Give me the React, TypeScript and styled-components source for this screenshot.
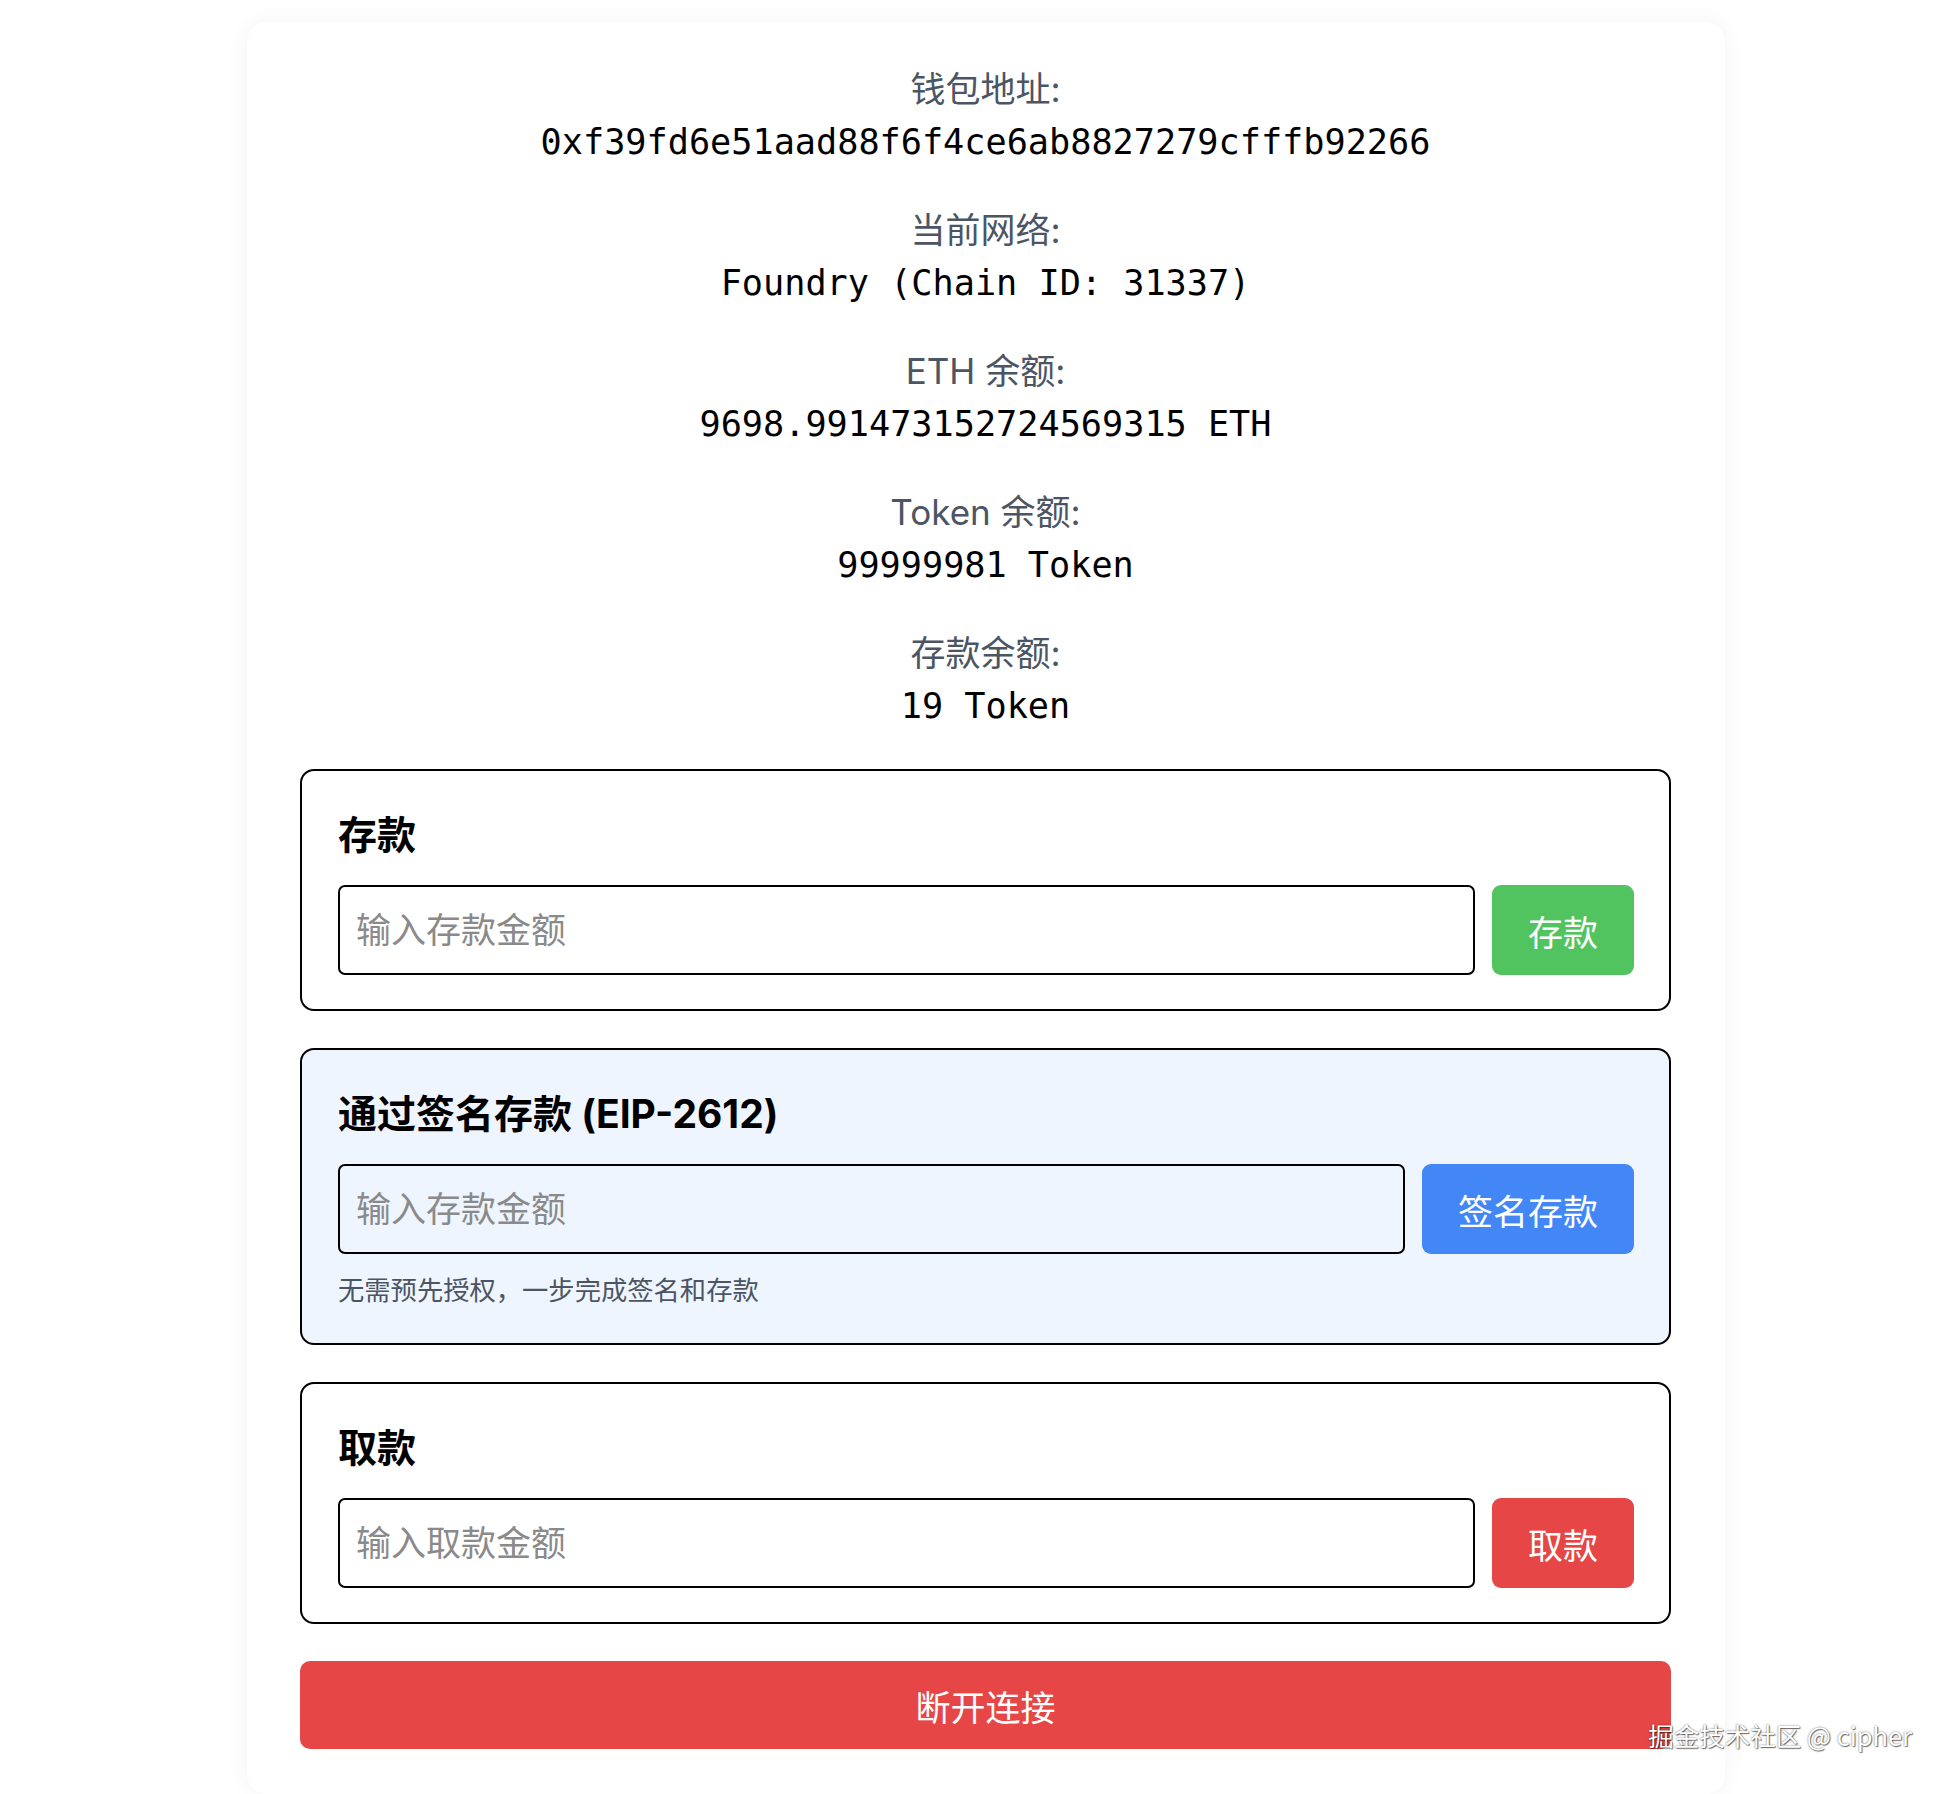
import React from "react";
import styled, { createGlobalStyle } from "styled-components";

const GlobalStyle = createGlobalStyle`
  html, body {
    margin: 0;
    padding: 0;
    background: #ffffff;
  }
  body {
    font-family: Inter, "Noto Sans CJK SC", sans-serif;
    color: #111;
  }
  * { box-sizing: border-box; }
`;

const Page = styled.div`
  position: relative;
  width: 1954px;
  min-height: 1794px;
  padding-top: 22px;
  padding-left: 247px;
  overflow: hidden;
`;

const Card = styled.div`
  width: 1478px;
  background: #fff;
  border-radius: 20px;
  box-shadow: 0 0 24px rgba(0, 0, 0, 0.05);
  padding: 42px 54px 45px 53px;
  display: flex;
  flex-direction: column;
  gap: 37px;
`;

const InfoItem = styled.div`
  display: flex;
  flex-direction: column;
  align-items: center;
`;

const Label = styled.div`
  font-family: Inter, "Noto Sans CJK SC", sans-serif;
  font-size: 35px;
  line-height: 51px;
  color: #4b5563;
`;

const Value = styled.div`
  font-family: "DejaVu Sans Mono", "Liberation Mono", monospace;
  font-size: 35.2px;
  line-height: 53px;
  color: #000;
`;

const Section = styled.div<{ $tint?: boolean }>`
  border: 2px solid #000;
  border-radius: 14px;
  background: ${(p) => (p.$tint ? "#eff5ff" : "#ffffff")};
  padding: 35px 35px 34px 36px;
  display: flex;
  flex-direction: column;
`;

const Title = styled.h2`
  margin: 0 0 21px;
  font-family: Inter, "Noto Sans CJK SC", sans-serif;
  font-size: 39px;
  line-height: 58px;
  font-weight: 700;
  color: #000;
`;

const Row = styled.div`
  display: flex;
  gap: 17px;
  align-items: stretch;
`;

const Input = styled.input`
  flex: 1;
  min-width: 0;
  height: 90px;
  border: 2px solid #000;
  border-radius: 7px;
  background: transparent;
  padding: 0 16px;
  font-family: Inter, "Noto Sans CJK SC", sans-serif;
  font-size: 35px;
  color: #111;
  outline: none;
  &::placeholder {
    color: #8a8a8a;
  }
`;

const ActionButton = styled.button<{ $color: string }>`
  height: 90px;
  border: none;
  border-radius: 9px;
  background: ${(p) => p.$color};
  color: #fff;
  padding: 0 36px;
  font-family: Inter, "Noto Sans CJK SC", sans-serif;
  font-size: 35px;
  cursor: pointer;
  white-space: nowrap;
`;

const Hint = styled.div`
  margin-top: 18px;
  font-family: Inter, "Noto Sans CJK SC", sans-serif;
  font-size: 26.3px;
  line-height: 37px;
  color: #4b5563;
`;

const Disconnect = styled.button`
  width: 100%;
  height: 88px;
  border: none;
  border-radius: 10px;
  background: #e64646;
  color: #fff;
  font-family: Inter, "Noto Sans CJK SC", sans-serif;
  font-size: 35px;
  cursor: pointer;
`;

const Watermark = styled.div`
  position: absolute;
  right: 42px;
  top: 1717px;
  font-family: "Noto Sans CJK SC", sans-serif;
  font-size: 25.5px;
  line-height: 36px;
  color: #fff;
  text-shadow: 0 0 2px rgba(0, 0, 0, 0.6), 1px 1px 1px rgba(0, 0, 0, 0.5);
  pointer-events: none;
`;

const info = [
  { label: "钱包地址:", value: "0xf39fd6e51aad88f6f4ce6ab8827279cfffb92266" },
  { label: "当前网络:", value: "Foundry (Chain ID: 31337)" },
  { label: "ETH 余额:", value: "9698.991473152724569315 ETH" },
  { label: "Token 余额:", value: "99999981 Token" },
  { label: "存款余额:", value: "19 Token" },
];

export default function App() {
  return (
    <Page>
      <GlobalStyle />
      <Card>
        {info.map((it) => (
          <InfoItem key={it.label}>
            <Label>{it.label}</Label>
            <Value>{it.value}</Value>
          </InfoItem>
        ))}

        <Section>
          <Title>存款</Title>
          <Row>
            <Input placeholder="输入存款金额" />
            <ActionButton $color="#51c35f">存款</ActionButton>
          </Row>
        </Section>

        <Section $tint>
          <Title>通过签名存款 (EIP-2612)</Title>
          <Row>
            <Input placeholder="输入存款金额" />
            <ActionButton $color="#4287f5">签名存款</ActionButton>
          </Row>
          <Hint>无需预先授权，一步完成签名和存款</Hint>
        </Section>

        <Section>
          <Title>取款</Title>
          <Row>
            <Input placeholder="输入取款金额" />
            <ActionButton $color="#e64646">取款</ActionButton>
          </Row>
        </Section>

        <Disconnect>断开连接</Disconnect>
      </Card>
      <Watermark>掘金技术社区 @ cipher</Watermark>
    </Page>
  );
}
